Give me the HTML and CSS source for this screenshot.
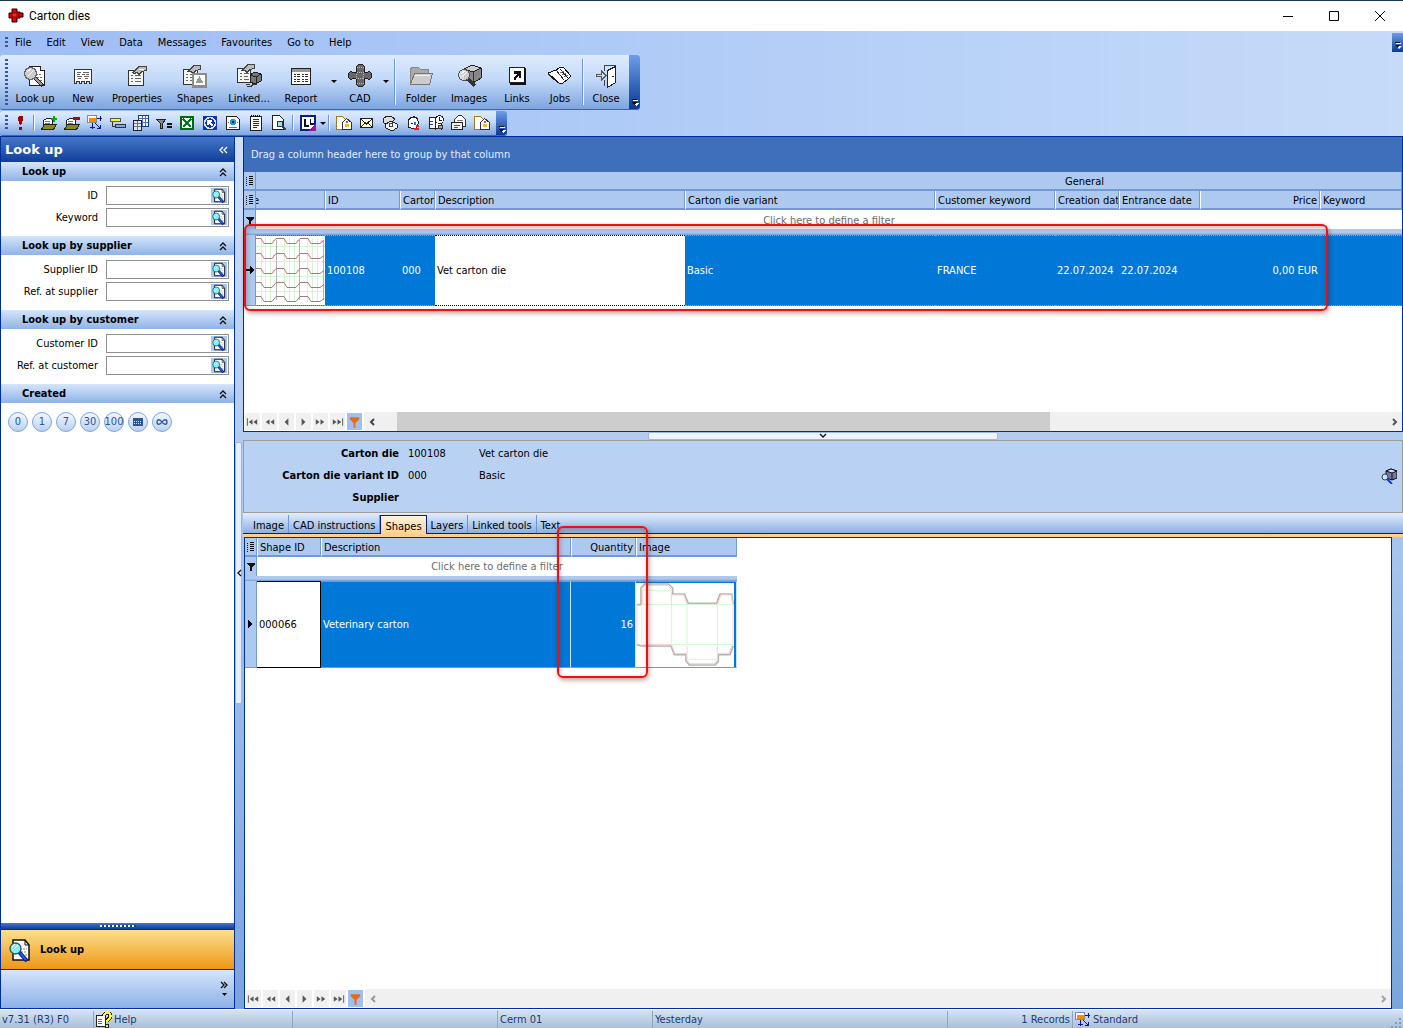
FILE: index.html
```html
<!DOCTYPE html>
<html lang="en">
<head>
<meta charset="utf-8">
<title>Carton dies</title>
<link rel="stylesheet" href="styles.css">
</head>
<body>
<svg class="sprite" aria-hidden="true">
  <symbol id="i-app" viewBox="0 0 16 16"><path d="M4 1h5v3h3v1h3v4h-3v1H9v4H4v-4H1V5h3z" fill="#e00000" stroke="#200"/><path d="M4 5h5v4H4z" fill="#f22" stroke="#700" stroke-width=".8"/><path d="M10 5h2v4h-2z" fill="#900"/></symbol>
  <symbol id="i-lookup" viewBox="0 0 24 24"><path d="M6.500 2.500h11l4 4v15h-15z" fill="#fff" stroke="#222"/><path d="M17.500 2.500v4h4" fill="#ddd" stroke="#222"/><path d="M13 10.500h6M14 13.500h5M14 16.500h5" stroke="#777" stroke-dasharray="2 1"/><path d="M11 13l9 9" stroke="#222" stroke-width="4"/><path d="M11 13l8 8" stroke="#999" stroke-width="2"/><circle cx="7.500" cy="9.500" r="6" fill="#ccc" stroke="#666" stroke-width="1.500"/><path d="M4 8l4-3M5 12l6-6" stroke="#fff"/></symbol>
  <symbol id="i-find" viewBox="0 0 24 24"><path d="M5 2h12l4 5v15H5z" fill="#fff" stroke="#111" stroke-width="1.500"/><path d="M17 2v5h4" fill="none" stroke="#111"/><path d="M12 11h7M13 14h6M14 17h5" stroke="#888" stroke-dasharray="2 1"/><path d="M11 14l8 9" stroke="#0a1a70" stroke-width="4"/><path d="M12 15l6 7" stroke="#1a5cff" stroke-width="2"/><circle cx="7.500" cy="10.500" r="5.500" fill="#7ff0f4" stroke="#256" stroke-width="1.300"/><path d="M4 9l3-3M5 12l5-5" stroke="#fff"/></symbol>
  <symbol id="i-new" viewBox="0 0 24 24"><path d="M3.500 5.500h17v14h-2v-2h-3v2h-2v-2h-3v2h-2v-2h-3v2h-2z" fill="#fff" stroke="#333"/><path d="M6 8.500h4M12 8.500h6M6 10.500h3M11 10.500h3M15 10.500h3M6 12.500h5M13 12.500h5M7 14.500h3M14 14.500h3" stroke="#666"/></symbol>
  <symbol id="i-prop" viewBox="0 0 24 24"><path d="M3.500 6.500h15v15h-15z" fill="#f4f4f4" stroke="#333"/><path d="M6 11.500h2M10 11.500h6M6 14.500h2M10 14.500h6M6 17.500h2M10 17.500h6" stroke="#666"/><path d="M8 8.500l6-6h7v4l-4 1-3 3-2-2-3 1z" fill="#bbb" stroke="#444"/><path d="M14 5h5" stroke="#fff"/></symbol>
  <symbol id="i-shapes" viewBox="0 0 26 24"><path d="M1.500 5.500h14v15h-14z" fill="#f4f4f4" stroke="#333"/><path d="M4 10.500h2M8 10.500h5M4 13.500h2M8 13.500h4M4 16.500h2M8 16.500h2" stroke="#666"/><path d="M6 7.500l6-6h6v4l-4 1-3 3-2-2z" fill="#bbb" stroke="#444"/><path d="M10 9h15v15H10z" fill="#8c8c8c"/><path d="M12 11h11v10H12z" fill="#fff"/><path d="M17.500 12l4 7h-8z" fill="#999"/></symbol>
  <symbol id="i-linked" viewBox="0 0 26 24"><path d="M1.500 4.500h13v14h-13z" fill="#f4f4f4" stroke="#333"/><path d="M4 9.500h2M8 9.500h5M4 12.500h2M8 12.500h4M4 15.500h2M8 15.500h5" stroke="#666"/><path d="M6 6.500l6-6h6v4l-4 1-3 3-2-2z" fill="#bbb" stroke="#444"/><path d="M14 11l5-3 6 2v7l-6 3-5-2z" fill="#777" stroke="#222"/><path d="M14 11l6 2 5-3M20 13v7" stroke="#222" fill="none"/><path d="M11 22.500h4l2-2h4M10 20.500h4" stroke="#333" fill="none"/></symbol>
  <symbol id="i-report" viewBox="0 0 24 24"><path d="M2.500 4.500h19v16h-19z" fill="#fff" stroke="#222"/><path d="M3 5h18v3H3z" fill="#999"/><path d="M5 10.500h2M8 10.500h3M13 10.500h2M16 10.500h3M5 12.500h2M8 12.500h3M13 12.500h2M16 12.500h3M5 15.500h2M8 15.500h3M13 15.500h2M16 15.500h3M5 17.500h2M8 17.500h3M13 17.500h2M16 17.500h3" stroke="#333"/></symbol>
  <symbol id="i-cad" viewBox="0 0 24 24"><path d="M8.500 8.500v-6l2-2h4l2 2v6h3l1-1h1l2 2v4l-2 2h-1l-1-1h-3v6l-2 2h-4l-2-2v-6h-4l-1 1h-1l-2-2v-4l2-2h1l1 1z" fill="#666" stroke="#222"/><path d="M8.500 8.500h7v6h-7zM9 3.500h7M9 19.500h7" fill="none" stroke="#bbb" stroke-dasharray="1 1"/></symbol>
  <symbol id="i-folder" viewBox="0 0 24 24"><path d="M1.500 20V4.500l2-1h6l2 2h8v4" fill="#aaa" stroke="#888"/><path d="M1.500 20.500l4-11h18l-3 11z" fill="#ccc" stroke="#777"/><path d="M6 11h15" stroke="#eee"/></symbol>
  <symbol id="i-images" viewBox="0 0 26 24"><path d="M8 5l8-4 9 3v10l-8 5-9-4z" fill="#888" stroke="#222"/><path d="M8 5l8-4 9 3-8 4z" fill="#ccc" stroke="#222"/><path d="M17 8v11" stroke="#333"/><path d="M11 14l8 8" stroke="#333" stroke-width="3"/><circle cx="8" cy="11" r="5.500" fill="#d8d8d8" fill-opacity=".9" stroke="#555"/><path d="M5 10l4-3M6 13l5-5" stroke="#fff"/></symbol>
  <symbol id="i-links" viewBox="0 0 24 24"><path d="M4.500 3.500h15v15h-15z" fill="#fff" stroke="#222"/><path d="M19.500 4v16H5" fill="none" stroke="#111" stroke-width="2"/><path d="M9 7h7v7h-2v-3l-2 2-1 3H9v-3l3-3H9z" fill="#111"/></symbol>
  <symbol id="i-jobs" viewBox="0 0 26 24"><path d="M1 9l8-3 3-2 4-1 8 9-3 3-5 4-3 1z" fill="#fff" stroke="#111"/><path d="M9 6l8 10M1 9l3 4 9 7M13 5l8 9" stroke="#222" fill="none"/><path d="M13 9l4-2M15 11l4-2M17 13l4-2" stroke="#777"/></symbol>
  <symbol id="i-close" viewBox="0 0 24 24"><path d="M10.500 7V1.500H22M10.500 16v5.500" fill="none" stroke="#444"/><path d="M13.500 6.500l8-4v16l-8 5z" fill="#fff" stroke="#222"/><path d="M18 12.500h2" stroke="#222"/><path d="M2 10.500h5v-4l5 5-5 5v-4H2z" fill="#ddd" stroke="#555"/></symbol>

  <symbol id="s-excl" viewBox="0 0 16 16"><path d="M6 2l1-1h3l1 1v3l-2 5H8L6 5z" fill="#a00000"/><path d="M7 12h3v3H7z" fill="#a00000"/></symbol>
  <symbol id="s-open" viewBox="0 0 16 16"><path d="M2.500 13V5.500l3-2h6V13z" fill="#fff" stroke="#222"/><path d="M4 6.500h5M4 8.500h5" stroke="#777"/><path d="M.5 14.500l3-5h12l-3 5z" fill="#8c8c10" stroke="#222"/><path d="M10 4h6M13 1v6" stroke="#00b000" stroke-width="2"/></symbol>
  <symbol id="s-shut" viewBox="0 0 16 16"><path d="M2.500 13V5.500l3-2h6V13z" fill="#fff" stroke="#222"/><path d="M4 6.500h5M4 8.500h5" stroke="#777"/><path d="M.5 14.500l3-5h12l-3 5z" fill="#8c8c10" stroke="#222"/><path d="M9 3.500h7" stroke="#c00000" stroke-width="3"/></symbol>
  <symbol id="s-std" viewBox="0 0 16 16"><path d="M.5.500h9v7h-9z" fill="#fff" stroke="#888"/><path d="M2 3h7v4H2z" fill="#f80"/><path d="M10 3.500h5M13.500 1v5M5.500 8v6M3 12.500h5M8 8l5 5M13.500 10v4M10 13.500h4" stroke="#0a1a8c" fill="none"/></symbol>
  <symbol id="s-bars" viewBox="0 0 16 16"><path d="M.5 3.500h10v3H.5z" fill="#ff0" stroke="#555"/><path d="M5.500 9.500h10v3h-10z" fill="#88a0f0" stroke="#333"/><path d="M2.500 7v4h3" stroke="#333" fill="none"/></symbol>
  <symbol id="s-grid" viewBox="0 0 16 16"><path d="M5.500.5h10v11h-10z" fill="#fff" stroke="#123a90"/><path d="M6 3.500h9M6 7.500h9M9.500 1v10M12.500 1v10" stroke="#5070b0"/><path d="M.5 5.500h8v10h-8z" fill="#dce8ff" stroke="#222"/><path d="M1 8.500h7M1 11.500h7M4.500 6v9" stroke="#777"/></symbol>
  <symbol id="s-filt" viewBox="0 0 16 16"><path d="M.5 4.500h9l-3 4v5h-2v-5z" fill="#888" stroke="#222"/><path d="M11 9h5M11 12h5" stroke="#111" stroke-width="2"/></symbol>
  <symbol id="s-xls" viewBox="0 0 16 16"><path d="M2 2h12v12H2z" fill="#fff" stroke="#006a10" stroke-width="2"/><path d="M4 4l8 8M12 4l-8 8" stroke="#007a20" stroke-width="2.500"/></symbol>
  <symbol id="s-arrow" viewBox="0 0 16 16"><path d="M1 1h14v14H1z" fill="#1030c0"/><circle cx="8" cy="8" r="5.500" fill="none" stroke="#dfe8ff" stroke-width="1.500"/><path d="M6 6l5 5M6 10V6h4" stroke="#fff" stroke-width="2" fill="none"/></symbol>
  <symbol id="s-web" viewBox="0 0 16 16"><path d="M1.500 1.500h10l3 3v10h-13z" fill="#fff" stroke="#222"/><circle cx="8" cy="7" r="3" fill="#29c"/><circle cx="8" cy="7" r="1" fill="#024"/><path d="M3 7.500h1M12 7.500h1M4 12.500h8" stroke="#c44"/></symbol>
  <symbol id="s-note" viewBox="0 0 16 16"><path d="M2.500 1.500h11v14h-11z" fill="#fff" stroke="#222"/><path d="M3 1h10" stroke="#111" stroke-width="2" stroke-dasharray="1 1"/><path d="M5 4.500h6M5 6.500h6M5 8.500h6M5 10.500h6M5 12.500h4" stroke="#333"/></symbol>
  <symbol id="s-prev" viewBox="0 0 16 16"><path d="M1.500.5h7l4 4v10h-11z" fill="#fff" stroke="#222"/><circle cx="9" cy="9" r="3" fill="#9df" stroke="#333"/><path d="M11 11l4 4" stroke="#246" stroke-width="2"/></symbol>
  <symbol id="s-logo" viewBox="0 0 16 16"><path d="M1 1h14v14H1z" fill="#fff" stroke="#0c1c8c" stroke-width="2"/><path d="M5 4v7h4M10.500 4v5h3" stroke="#111" stroke-width="1.500" fill="none"/><path d="M16 8v8H8z" fill="#a0109c"/></symbol>
  <symbol id="s-copy" viewBox="0 0 16 16"><path d="M.5 1.500h6l3 3v10h-9z" fill="#fff" stroke="#a07820"/><path d="M6.500 7.500l4-4 5 4v7h-9z" fill="#fff" stroke="#333"/><path d="M9 9h4v3H9z" fill="#e8c020"/><path d="M10 6.500h2" stroke="#c3c" stroke-width="2"/></symbol>
  <symbol id="s-mail" viewBox="0 0 16 16"><path d="M1.500 3.500h12v9h-12z" fill="#ffffd8" stroke="#222"/><path d="M2 4l5.500 5L13 4M2 12l4-4M13 12L9 8" fill="none" stroke="#222"/></symbol>
  <symbol id="s-phone" viewBox="0 0 16 16"><path d="M1 5c2-5 8-5 12-1l-3 3-2-1-3 3-3-1z" fill="#ddd" stroke="#222"/><path d="M3 10l5-4 7 3v4l-5 3-6-3z" fill="#eee" stroke="#222"/><circle cx="9" cy="10" r="2" fill="#fff" stroke="#444"/></symbol>
  <symbol id="s-face" viewBox="0 0 16 16"><path d="M3 12V7c0-6 10-7 10-1v3l-2 4H6z" fill="#fff" stroke="#222"/><path d="M4 5c2-3 6-4 8-2M6 8h2" stroke="#222" fill="none"/><path d="M9 7h2v3H9z" fill="#27d"/><path d="M9 14h5M11 11h3" stroke="#d22" stroke-width="2"/></symbol>
  <symbol id="s-book" viewBox="0 0 16 16"><path d="M1 3l3-1 3 1v11l-3-1-3 1zM7 3l3-1 3 1v11l-3-1-3 1z" fill="#fff" stroke="#222"/><path d="M2 6.500h3M2 9.500h3" stroke="#33c"/><circle cx="11.500" cy="4.500" r="4" fill="#fff" stroke="#222"/><path d="M11.500 2v3h2" stroke="#222" fill="none"/><path d="M10.500 10.500h4v3h-4z" fill="#aaa" stroke="#333"/></symbol>
  <symbol id="s-print" viewBox="0 0 16 16"><path d="M3.500 7V4.500l4-4h3l4 4v7h-3" fill="#fff" stroke="#333"/><path d="M6 5.500h6" stroke="#777"/><path d="M.5 7.500h11v7H.5z" fill="#eee" stroke="#222"/><path d="M3 10.500h6M3 12.500h4" stroke="#555"/></symbol>
  <symbol id="s-help" viewBox="0 0 16 16"><path d="M.5 3.500h9v11h-9z" fill="#fff" stroke="#222"/><path d="M2 7.500h4M2 9.500h4M2 11.500h4" stroke="#666"/><path d="M8 4c0-4 7-4 6.500 0 0 3-3.500 3-3.500 5.500" fill="none" stroke="#222" stroke-width="4"/><path d="M8 4c0-4 7-4 6.500 0 0 3-3.500 3-3.500 5.500" fill="none" stroke="#ff0" stroke-width="2.300"/><path d="M9.500 12.500h3v3h-3z" fill="#ff0" stroke="#222"/></symbol>
  <symbol id="s-cube" viewBox="0 0 16 16"><path d="M5 3l5-2 6 2v7l-5 2-6-2z" fill="#77a" stroke="#111"/><path d="M5 3l5-2 6 2-5 2z" fill="#dde" stroke="#111"/><path d="M11 5v7" stroke="#111"/><circle cx="4" cy="9" r="3" fill="#cef" fill-opacity=".9" stroke="#345"/><path d="M6 11l5 5" stroke="#13f" stroke-width="2"/></symbol>

  <symbol id="n-first" viewBox="0 0 16 16"><path d="M2 4h1v8H2zM8 5v6L4 8zM13 5v6L9 8z" fill="#555"/></symbol>
  <symbol id="n-pprev" viewBox="0 0 16 16"><path d="M8 5v6L4 8zM13 5v6L9 8z" fill="#555"/></symbol>
  <symbol id="n-prev" viewBox="0 0 16 16"><path d="M10 4v8L6 8z" fill="#555"/></symbol>
  <symbol id="n-next" viewBox="0 0 16 16"><path d="M6 4v8l4-4z" fill="#555"/></symbol>
  <symbol id="n-nnext" viewBox="0 0 16 16"><path d="M3 5v6l4-3zM8 5v6l4-3z" fill="#555"/></symbol>
  <symbol id="n-last" viewBox="0 0 16 16"><path d="M3 5v6l4-3zM8 5v6l4-3zM13 4h1v8h-1z" fill="#555"/></symbol>
  <symbol id="n-filter" viewBox="0 0 16 16"><path d="M3 3h10v2L9 9v5H7V9L3 5z" fill="#f06800"/></symbol>
  <symbol id="c-up" viewBox="0 0 10 10"><path d="M2 5l3-3 3 3M2 9l3-3 3 3" fill="none" stroke="#111" stroke-width="1.300"/></symbol>
  <symbol id="c-left" viewBox="0 0 6 10"><path d="M5 2L2 5l3 3" fill="none" stroke="#444" stroke-width="2"/></symbol>
  <symbol id="c-right" viewBox="0 0 6 10"><path d="M1 2l3 3-3 3" fill="none" stroke="#555" stroke-width="2"/></symbol>
  <symbol id="c-over" viewBox="0 0 8 9"><path d="M2 2h5v1H2zM2 5h6L5 8z" fill="#fff"/><path d="M1 1h5v1H1zM1 4h5L3.500 7z" fill="#111"/></symbol>
  <symbol id="c-menu" viewBox="0 0 9 10"><path d="M4 .5h4M4 2.500h4M4 4.500h4M4 6.500h4M4 8.500h4M1 1.500h1M1 3.500h1M1 5.500h1M1 7.500h1M1 9.500h1" stroke="#111"/></symbol>
  <symbol id="c-funnel" viewBox="0 0 8 8"><path d="M0 0h8v1L5 4v4H3V4L0 1z" fill="#111"/></symbol>
</svg>

<header class="titlebar">
  <svg width="16" height="16"><use href="#i-app"/></svg>
  <h1>Carton dies</h1>
  <div class="winbtns">
    <button aria-label="Minimise"><svg width="12" height="12"><path d="M1 6.500h10" stroke="#000"/></svg></button>
    <button aria-label="Maximise"><svg width="12" height="12"><path d="M1.500 1.500h9v9h-9z" fill="none" stroke="#000"/></svg></button>
    <button aria-label="Close window"><svg width="12" height="12"><path d="M1 1l10 10M11 1L1 11" stroke="#000"/></svg></button>
  </div>
</header>

<div class="bars">
  <nav class="menubar">
    <span class="grip"></span>
    <button>File</button><button>Edit</button><button>View</button><button>Data</button><button>Messages</button><button>Favourites</button><button>Go to</button><button>Help</button>
    <button class="over" aria-label="More menus"><svg width="8" height="9"><use href="#c-over"/></svg></button>
  </nav>
  <div class="toolbar big">
    <span class="grip"></span>
    <button class="w46"><svg><use href="#i-lookup"/></svg>Look up</button>
    <button class="w50"><svg><use href="#i-new"/></svg>New</button>
    <button class="w58"><svg><use href="#i-prop"/></svg>Properties</button>
    <button class="w58"><svg><use href="#i-shapes"/></svg>Shapes</button>
    <button class="w50"><svg><use href="#i-linked"/></svg>Linked...</button>
    <button class="w54"><svg><use href="#i-report"/></svg>Report</button>
    <button class="drop" aria-label="Report options"></button>
    <button class="w40"><svg><use href="#i-cad"/></svg>CAD</button>
    <button class="drop" aria-label="CAD options"></button>
    <span class="sep"></span>
    <button class="w46"><svg><use href="#i-folder"/></svg>Folder</button>
    <button class="w50"><svg><use href="#i-images"/></svg>Images</button>
    <button class="w46"><svg><use href="#i-links"/></svg>Links</button>
    <button class="w40"><svg><use href="#i-jobs"/></svg>Jobs</button>
    <span class="sep"></span>
    <button class="w40"><svg><use href="#i-close"/></svg>Close</button>
    <button class="over" aria-label="More buttons"><svg width="8" height="9"><use href="#c-over"/></svg></button>
  </div>
  <div class="toolbar small">
    <span class="grip"></span>
    <button aria-label="Priority"><svg><use href="#s-excl"/></svg></button>
    <span class="sep"></span>
    <button aria-label="Add to folder"><svg><use href="#s-open"/></svg></button>
    <button aria-label="Remove from folder"><svg><use href="#s-shut"/></svg></button>
    <button aria-label="Layout"><svg><use href="#s-std"/></svg></button>
    <button aria-label="Bands"><svg><use href="#s-bars"/></svg></button>
    <button aria-label="Columns"><svg><use href="#s-grid"/></svg></button>
    <button aria-label="Filter"><svg><use href="#s-filt"/></svg></button>
    <button aria-label="Export to Excel"><svg><use href="#s-xls"/></svg></button>
    <button aria-label="Refresh"><svg><use href="#s-arrow"/></svg></button>
    <button aria-label="Export to web"><svg><use href="#s-web"/></svg></button>
    <button aria-label="Notes"><svg><use href="#s-note"/></svg></button>
    <button aria-label="Preview"><svg><use href="#s-prev"/></svg></button>
    <span class="sep"></span>
    <button aria-label="Labels"><svg><use href="#s-logo"/></svg></button>
    <button class="drop" aria-label="Label options"></button>
    <span class="sep"></span>
    <button aria-label="Copy"><svg><use href="#s-copy"/></svg></button>
    <button aria-label="Mail"><svg><use href="#s-mail"/></svg></button>
    <button aria-label="Phone"><svg><use href="#s-phone"/></svg></button>
    <button aria-label="Contact"><svg><use href="#s-face"/></svg></button>
    <button aria-label="Agenda"><svg><use href="#s-book"/></svg></button>
    <button aria-label="Print letter"><svg><use href="#s-print"/></svg></button>
    <button aria-label="Documents"><svg><use href="#s-copy"/></svg></button>
    <button class="over" aria-label="More tools"><svg width="8" height="9"><use href="#c-over"/></svg></button>
  </div>
</div>

<main class="work">
  <aside class="side">
    <div class="side-head"><h2>Look up</h2><button aria-label="Collapse panel"><svg width="10" height="10"><path d="M5 2L2 5l3 3M9 2L6 5l3 3" fill="none" stroke="#fff" stroke-width="1.300"/></svg></button></div>
    <section>
      <h3>Look up<svg width="10" height="10"><use href="#c-up"/></svg></h3>
      <div class="field"><label for="f1">ID</label><div class="box"><input id="f1"><button aria-label="Find ID"><svg><use href="#i-find"/></svg></button></div></div>
      <div class="field"><label for="f2">Keyword</label><div class="box"><input id="f2"><button aria-label="Find keyword"><svg><use href="#i-find"/></svg></button></div></div>
    </section>
    <section>
      <h3>Look up by supplier<svg width="10" height="10"><use href="#c-up"/></svg></h3>
      <div class="field"><label for="f3">Supplier ID</label><div class="box"><input id="f3"><button aria-label="Find supplier"><svg><use href="#i-find"/></svg></button></div></div>
      <div class="field"><label for="f4">Ref. at supplier</label><div class="box"><input id="f4"><button aria-label="Find supplier reference"><svg><use href="#i-find"/></svg></button></div></div>
    </section>
    <section>
      <h3>Look up by customer<svg width="10" height="10"><use href="#c-up"/></svg></h3>
      <div class="field"><label for="f5">Customer ID</label><div class="box"><input id="f5"><button aria-label="Find customer"><svg><use href="#i-find"/></svg></button></div></div>
      <div class="field"><label for="f6">Ref. at customer</label><div class="box"><input id="f6"><button aria-label="Find customer reference"><svg><use href="#i-find"/></svg></button></div></div>
    </section>
    <section>
      <h3>Created<svg width="10" height="10"><use href="#c-up"/></svg></h3>
      <div class="days">
        <button>0</button><button>1</button><button>7</button><button>30</button><button>100</button>
        <button aria-label="Pick a date"><svg width="10" height="8"><path d="M0 0h10v8H0z" fill="#2f5593"/><path d="M1 3.500h8M1 5.500h8" stroke="#cfe0fa" stroke-dasharray="1 1"/></svg></button>
        <button aria-label="Always"><svg width="14" height="10"><path d="M7 5C5 2 2 2 2 5s3 3 5 0 5-3 5 0-3 3-5 0z" fill="none" stroke="#2f5593" stroke-width="1.300"/></svg></button>
      </div>
    </section>
    <div class="side-foot">
      <div class="dots"></div>
      <button class="pane"><svg width="24" height="24"><use href="#i-find"/></svg>Look up</button>
      <div class="more"><button aria-label="Configure buttons"><svg width="10" height="16"><path d="M2 1l3 3-3 3M5 1l3 3-3 3" fill="none" stroke="#111" stroke-width="1.300"/><path d="M3 12h5l-2.500 3z"/></svg></button></div>
    </div>
  </aside>
  <div class="vsplit"><span><svg width="6" height="10"><path d="M5 2L2 5l3 3" fill="none" stroke="#111" stroke-width="1.300"/></svg></span></div>

  <div class="content">
    <section class="grid-top">
      <p class="group">Drag a column header here to group by that column</p>
      <table class="dies">
        <colgroup><col class="k-mark"><col class="k-img"><col class="k-id"><col class="k-cart"><col class="k-desc"><col class="k-desc"><col class="k-cust"><col class="k-crea"><col class="k-entr"><col class="k-price"><col></colgroup>
        <thead>
          <tr><th class="mark"><svg width="9" height="10"><use href="#c-menu"/></svg></th><th colspan="10" class="band">General</th></tr>
          <tr><th class="mark"><svg width="9" height="10"><use href="#c-menu"/></svg></th><th class="cut">e</th><th>ID</th><th>Carton</th><th>Description</th><th>Carton die variant</th><th>Customer keyword</th><th>Creation dat</th><th>Entrance date</th><th class="num">Price</th><th>Keyword</th></tr>
          <tr class="filter"><td class="mark"><svg width="8" height="8"><use href="#c-funnel"/></svg></td><td colspan="10">Click here to define a filter</td></tr>
          <tr class="rule"><td colspan="11"></td></tr>
        </thead>
        <tbody>
          <tr class="sel"><td class="mark"><svg width="10" height="8"><path d="M0 4h6" stroke="#000" stroke-width="2"/><path d="M5 0v8l4-4z"/></svg></td>
            <td class="pic"><svg width="69" height="69" viewBox="0 0 69 69"><path d="M0 0h69v69H0z" fill="#fff"/>
              <g stroke="#d4f4d4" fill="none"><path d="M5.500 2v64M9.500 2v64M14.500 2v64M28.500 2v64M33.500 2v64M38.500 2v64M51.500 2v64M56.500 2v64M61.500 2v64M0 10.500h69M0 25.500h69M0 40.500h69M0 55.500h69"/></g>
              <path d="M20.500 4v60M43.500 4v60M67.500 4v60" stroke="#b4b4b4"/>
              <g fill="none" stroke="#978080"><path id="w" d="M0 2.500h5l3 5h8l4-5h8l3 5h9l4-5h8l3 5h9l4-3"/><use href="#w" y="15"/><use href="#w" y="30"/><use href="#w" y="44"/><use href="#w" y="58"/></g>
              <g stroke="#f99" fill="none"><path d="M6 4l2 4M16 8l2-4M29 4l2 4M40 8l2-4M53 4l2 4M64 8l2-4M6 19l2 4M16 23l2-4M29 19l2 4M40 23l2-4M53 19l2 4M6 34l2 4M16 38l2-4M29 34l2 4M40 38l2-4M53 34l2 4"/></g></svg></td>
            <td>100108</td><td>000</td><td class="focus">Vet carton die</td><td>Basic</td><td>FRANCE</td><td>22.07.2024</td><td>22.07.2024</td><td class="num">0,00 EUR</td><td></td></tr>
        </tbody>
      </table>
      <div class="navbar">
        <button aria-label="First"><svg><use href="#n-first"/></svg></button><button aria-label="Page back"><svg><use href="#n-pprev"/></svg></button><button aria-label="Previous"><svg><use href="#n-prev"/></svg></button><button aria-label="Next"><svg><use href="#n-next"/></svg></button><button aria-label="Page forward"><svg><use href="#n-nnext"/></svg></button><button aria-label="Last"><svg><use href="#n-last"/></svg></button><button class="on" aria-label="Filter"><svg><use href="#n-filter"/></svg></button>
        <button class="scroll" aria-label="Scroll left"><svg width="6" height="10"><use href="#c-left"/></svg></button>
        <div class="track"><span class="thumb"></span></div>
        <button class="scroll" aria-label="Scroll right"><svg width="6" height="10"><use href="#c-right"/></svg></button>
      </div>
      <div class="callout wide"></div>
    </section>
    <div class="hsplit"><span><svg width="10" height="6"><path d="M2 1l3 3 3-3" fill="none" stroke="#111" stroke-width="1.300"/></svg></span></div>
    <section class="info">
      <dl>
        <dt>Carton die</dt><dd>100108</dd><dd>Vet carton die</dd>
        <dt>Carton die variant ID</dt><dd>000</dd><dd>Basic</dd>
        <dt>Supplier</dt><dd></dd><dd></dd>
      </dl>
      <button aria-label="Show image"><svg width="16" height="16"><use href="#s-cube"/></svg></button>
    </section>
    <nav class="tabs"><button>Image</button><button>CAD instructions</button><button class="cur">Shapes</button><button>Layers</button><button>Linked tools</button><button>Text</button></nav>
    <section class="grid-bottom">
      <table class="shapes">
        <colgroup><col class="k-mark"><col class="k-sid"><col class="k-desc"><col class="k-qty"><col class="k-pic"></colgroup>
        <thead>
          <tr><th class="mark"><svg width="9" height="10"><use href="#c-menu"/></svg></th><th>Shape ID</th><th>Description</th><th class="num">Quantity</th><th>Image</th></tr>
          <tr class="filter"><td class="mark"><svg width="8" height="8"><use href="#c-funnel"/></svg></td><td colspan="4">Click here to define a filter</td></tr>
          <tr class="rule"><td colspan="5"></td></tr>
        </thead>
        <tbody>
          <tr class="sel"><td class="mark"><svg width="6" height="8"><path d="M0 0v8l5-4z"/></svg></td><td class="focus">000066</td><td>Veterinary carton</td><td class="num">16</td>
            <td class="pic"><svg width="98" height="84" viewBox="1193 217 294 252"><path d="M1193 217h294v252h-294z" fill="#fff"/>
              <g fill="none" stroke-width="3"><path d="M1195 282h13v-50l10-12h72l13 12v18h35l12 28h85l10-28h35l5 32M1195 402l15 4h88l10 26h35v18l10 13h77l10-11v-20h35l10-27" stroke="#b4b4b4" stroke-width="5"/>
              <path d="M1196 284v118M1212 282v-48l7-10h68l12 12v45M1300 253h36l10 28h92l10-28h31l5 30v118M1212 402h88l10 26h34M1346 405v44l9 10h73l9-10v-44M1440 428h32l9-24" stroke="#ffd0d0"/>
              <path d="M1210 239h92M1210 282v120M1300 282v120M1346 282v120M1438 282v120M1210 282h276M1300 402h186M1346 446h92" stroke="#d0fad0"/></g></svg></td></tr>
        </tbody>
      </table>
      <div class="navbar idle">
        <button aria-label="First"><svg><use href="#n-first"/></svg></button><button aria-label="Page back"><svg><use href="#n-pprev"/></svg></button><button aria-label="Previous"><svg><use href="#n-prev"/></svg></button><button aria-label="Next"><svg><use href="#n-next"/></svg></button><button aria-label="Page forward"><svg><use href="#n-nnext"/></svg></button><button aria-label="Last"><svg><use href="#n-last"/></svg></button><button class="on" aria-label="Filter"><svg><use href="#n-filter"/></svg></button>
        <button class="scroll" aria-label="Scroll left"><svg width="6" height="10"><use href="#c-left"/></svg></button>
        <div class="track"></div>
        <button class="scroll" aria-label="Scroll right"><svg width="6" height="10"><use href="#c-right"/></svg></button>
      </div>
      <div class="callout tall"></div>
    </section>
  </div>
</main>

<footer class="status">
  <span class="s-ver">v7.31 (R3) F0</span>
  <span class="s-helpcell"><svg><use href="#s-help"/></svg>Help</span>
  <span class="s-empty"></span>
  <span class="s-user">Cerm 01</span>
  <span class="s-day">Yesterday</span>
  <span class="s-rec">1 Records</span>
  <span class="s-std"><svg><use href="#s-std"/></svg>Standard</span>
  <svg class="size" width="12" height="12"><path d="M8 2h2v2H8zM8 6h2v2H8zM4 6h2v2H4zM8 10h2v2H8zM4 10h2v2H4zM0 10h2v2H0z" fill="#7d9cc8"/></svg>
</footer>
</body>
</html>
```
FILE: styles.css
```css
* { box-sizing: border-box; margin: 0; padding: 0; }
body {
  min-height: 100vh;
  display: flex;
  flex-direction: column;
  font: 11px/14px "DejaVu Sans Condensed", "Noto Sans", sans-serif;
  color: #000;
  background: #a9c7f7;
}
.sprite { display: none; }
svg { display: block; flex: none; }
button, input { font: inherit; color: inherit; background: none; border: 0; }
button { display: flex; align-items: center; justify-content: center; white-space: nowrap; }

/* title bar */
.titlebar { display: flex; align-items: center; height: 31px; padding-left: 8px; border-top: 1px solid #1b3550; background: #fff; }
.titlebar h1 { margin-left: 5px; font: 12px/16px Roboto, sans-serif; }
.winbtns { display: flex; margin-left: auto; }
.winbtns button { width: 46px; height: 30px; }

/* menus and toolbars */
.bars { background: linear-gradient(90deg, #9dbdf5, #c5dbf8); }
.grip { width: 3px; margin: 4px 0 4px 5px; background: repeating-linear-gradient(#35589e 0 2px, transparent 2px 4px); }
.menubar { display: flex; height: 24px; }
.menubar .grip { margin: 6px 0 6px 5px; }
.menubar button { padding: 0 8px 0 7px; height: 24px; }
.over { align-self: stretch; align-items: flex-end; background: linear-gradient(#6d9eea, #0a3a96); }
.menubar button.over { margin: 2px 0 3px auto; height: 19px; width: 11px; padding: 0 0 2px; }
.toolbar { display: flex; width: fit-content; border-radius: 3px; background: linear-gradient(#deebfd, #c3d9f9 45%, #7da5df); border-bottom: 1px solid #3a66b2; }
.toolbar .over { margin-left: 3px; border-radius: 0 3px 3px 0; }
.toolbar svg { shape-rendering: crispEdges; }
.toolbar.big { height: 55px; }
.big button { flex-direction: column; justify-content: flex-start; gap: 4px; padding-top: 9px; }
.big button svg { width: 26px; height: 24px; }
.big .over { width: 11px; justify-content: flex-end; padding: 0 0 2px; align-items: center; }
.big .over svg, .small .over svg { width: 8px; height: 9px; }
.w40 { width: 40px; }
.w46 { width: 46px; }
.w50 { width: 50px; }
.w54 { width: 54px; }
.w58 { width: 58px; }
.big .grip { margin-right: 4px; }
.sep { width: 2px; margin: 4px 2px; background: linear-gradient(90deg, #6b95d8 50%, #f2f7ff 50%); }
.drop { width: 12px; }
.drop::before { content: ""; border: 3px solid transparent; border-top-color: #000; border-bottom: 0; }
.big .drop { padding-top: 25px; }
.toolbar.small { height: 25px; margin-top: 1px; }
.small button { width: 23px; }
.small button svg { width: 16px; height: 16px; }
.small button.drop { width: 7px; }
.small button.over { width: 11px; padding-bottom: 1px; }

/* work area */
.work { flex: 1; display: flex; border-top: 1px solid #002d96; background: linear-gradient(#cfe0fa, #7aa5dc); }
.side { width: 235px; flex: none; display: flex; flex-direction: column; background: #fff; border: solid #002d96; border-width: 0 1px 1px; }
.side-head { display: flex; align-items: center; justify-content: space-between; height: 25px; padding: 0 6px 0 4px; color: #fff; background: linear-gradient(#4577cb, #0f3f98); }
.side-head h2 { font: bold 13px/16px "DejaVu Sans", sans-serif; }
.side section { min-height: 74px; }
.side h3 { display: flex; align-items: center; justify-content: space-between; height: 19px; padding: 0 6px 0 21px; margin-bottom: 5px; font-size: 11px; background: linear-gradient(#d5e5fb, #8fb3e8); }
.field { display: flex; align-items: center; margin: 0 5px 3px 0; }
.field label { flex: none; width: 105px; padding-right: 8px; text-align: right; white-space: nowrap; }
.box { flex: 1; min-width: 0; display: flex; align-items: center; height: 19px; border: 1px solid #8f8f8f; }
.box input { flex: 1; min-width: 0; height: 17px; padding: 0 2px; outline: 0; }
.box button { margin-right: 1px; background: #a9c6f4; }
.box button svg { width: 16px; height: 15px; }
.days { display: flex; gap: 4px; padding: 4px 7px; }
.days button { width: 20px; height: 20px; border: 1px solid #7ea3d8; border-radius: 50%; color: #2f5593; background: linear-gradient(#f2f7ff, #b9d1f4); }
.side-foot { margin-top: auto; }
.dots { height: 7px; border-bottom: 1px solid #002d96; background: repeating-linear-gradient(90deg, #fff 0 2px, #1d3f80 2px 4px) center / 36px 2px no-repeat, linear-gradient(#4577cb, #0f3f98); }
.pane { width: 100%; height: 40px; justify-content: flex-start; gap: 8px; padding-left: 7px; font-weight: bold; border-bottom: 1px solid #002d96; background: linear-gradient(#fbe08c, #ee9718); }
.more { display: flex; justify-content: flex-end; align-items: center; height: 38px; padding: 0 5px; background: linear-gradient(#d5e5fb, #8db1e7); }
.vsplit { width: 8px; flex: none; display: flex; align-items: center; }
.vsplit span { display: flex; align-items: center; width: 7px; height: 262px; border: 1px solid #9db8dd; border-radius: 2px; background: #e4eefb; }
.content { flex: 1; min-width: 0; display: flex; flex-direction: column; }

/* data grids */
.grid-top { position: relative; display: flex; flex-direction: column; height: 295px; border: solid #002d96; border-width: 0 1px 1px; background: #fff; }
.group { height: 35px; padding: 11px 7px 0; color: #e3ecfa; background: #3f6fbb; }
table { border-collapse: separate; border-spacing: 0; table-layout: fixed; text-align: left; }
th, td { overflow: hidden; white-space: nowrap; font-weight: normal; }
th { height: 19px; padding: 3px 2px 0; background: #adc9ef; border-bottom: 2px solid #7398d3; border-left: 1px solid #fff; border-right: 1px solid #7398d3; }
.num { text-align: right; }
.mark { padding: 0 1px; background: #adc9ef; border-left: 0; border-right: 1px solid #7398d3; }
.mark svg { margin: auto; shape-rendering: crispEdges; }
.dies { width: 100%; }
.k-mark { width: 12px; }
.k-img { width: 69px; }
.k-id { width: 75px; }
.k-cart { width: 35px; }
.k-desc { width: 250px; }
.k-cust { width: 120px; }
.k-crea { width: 64px; }
.k-entr { width: 81px; }
.k-price { width: 120px; }
.k-sid { width: 64px; }
.k-qty { width: 65px; }
.k-pic { width: 101px; }
.band { padding-left: 514px; text-align: center; border-left: 0; }
.cut { padding-left: 0; border-left: 0; text-indent: -3px; }
.filter td { height: 19px; text-align: center; color: #6d6d6d; }
.dies .filter td { padding-top: 2px; }
.rule td { height: 6px; background: linear-gradient(#adc9ef 60%, #7398d3); }
.sel td { height: 71px; padding: 0 2px; color: #fff; background: #0078d7; border: dotted #e09050; border-width: 1px 0; }
.sel td.mark { padding: 0; background: #adc9ef; border: solid #7398d3; border-width: 0 1px 1px 0; }
.sel td.pic { padding: 0; }
.sel td.focus { color: #000; background: #fff; border-color: #000; }

.navbar { display: flex; align-items: center; height: 19px; margin-top: auto; padding-left: 1px; background: #fff; }
.navbar button { width: 15px; height: 17px; margin-right: 2px; background: #f0f0f0; }
.navbar button svg { width: 15px; height: 16px; }
.navbar button.on { background: #a0bff5; }
.navbar .scroll { width: 15px; height: 19px; margin: 0; }
.navbar .scroll svg { width: 6px; height: 10px; }
.track { flex: 1; height: 19px; padding-left: 18px; background: #f0f0f0; }
.thumb { display: block; width: 66%; height: 19px; background: #cdcdcd; }
.idle .scroll svg { opacity: .5; }

.hsplit { display: flex; justify-content: center; height: 8px; }
.hsplit span { display: flex; justify-content: center; width: 350px; height: 8px; border: 1px solid #9db8dd; border-radius: 2px; background: #eef4fd; }

.info { display: flex; align-items: center; justify-content: space-between; height: 73px; padding: 0 5px 2px 0; border: 1px solid #9d9d9d; background: #b9d1f2; }
.info dl { display: grid; grid-template-columns: 155px 62px auto; grid-auto-rows: 22px; gap: 0 9px; align-items: center; }
.info dt { font-weight: bold; text-align: right; white-space: nowrap; }

.tabs { display: flex; height: 24px; padding: 2px 0 0 6px; border-bottom: 3px solid #ffcf8c; background: linear-gradient(#e2edfc, #87ade2) padding-box; box-shadow: inset 0 -1px #001c96; }
.tabs button { height: 18px; padding: 3px 4px 0; border: 0 solid #6b95d8; border-right-width: 1px; }
.tabs .cur { height: 19px; background: linear-gradient(#fff3dc, #ffd391); border: 1px solid #001c96; border-bottom: 0; }
.tabs button:last-child { border: 0; }

.grid-bottom { position: relative; flex: 1; display: flex; flex-direction: column; align-items: flex-start; margin: 0 11px 0 1px; border: 1px solid #002d96; background: #fff; }
.shapes { width: 492px; }
.grid-bottom .rule td { height: 5px; }
.shapes .sel td { height: 87px; border: 1px solid #d98040; border-right-color: #cfe0fa; border-left: 0; }
.shapes .sel td.focus { border-color: #000; }
.shapes .sel td.mark { border: solid #7398d3; border-width: 0 1px 1px 0; }
.grid-bottom .navbar { width: 100%; }

.callout { position: absolute; border: 2px solid #ec1010; border-radius: 6px; box-shadow: 1px 2px 5px rgba(90, 0, 0, .4), inset 1px 2px 5px rgba(90, 0, 0, .3); pointer-events: none; }
.wide { left: 0; top: 87px; width: 1084px; height: 87px; }
.tall { left: 312px; top: -12px; width: 91px; height: 152px; }

/* status bar */
.status { display: flex; height: 19px; padding-top: 1px; line-height: 18px; color: #1d3b70; border-top: 1px solid #fff; background: linear-gradient(#d6e3f4, #a9bfda); }
.status span { display: flex; align-items: center; gap: 2px; padding: 0 2px; border-right: 1px solid #8fa5c4; white-space: nowrap; }
.status svg { width: 16px; height: 16px; shape-rendering: crispEdges; }
.status .s-ver { width: 94px; }
.status .s-helpcell { width: 199px; }
.status .s-empty { width: 205px; }
.status .s-user { width: 155px; }
.status .s-day { flex: 1; }
.status .s-rec { width: 125px; justify-content: flex-end; }
.status .s-std { width: 318px; border: 0; }
.status .size { width: 12px; height: 12px; align-self: flex-end; }
```
